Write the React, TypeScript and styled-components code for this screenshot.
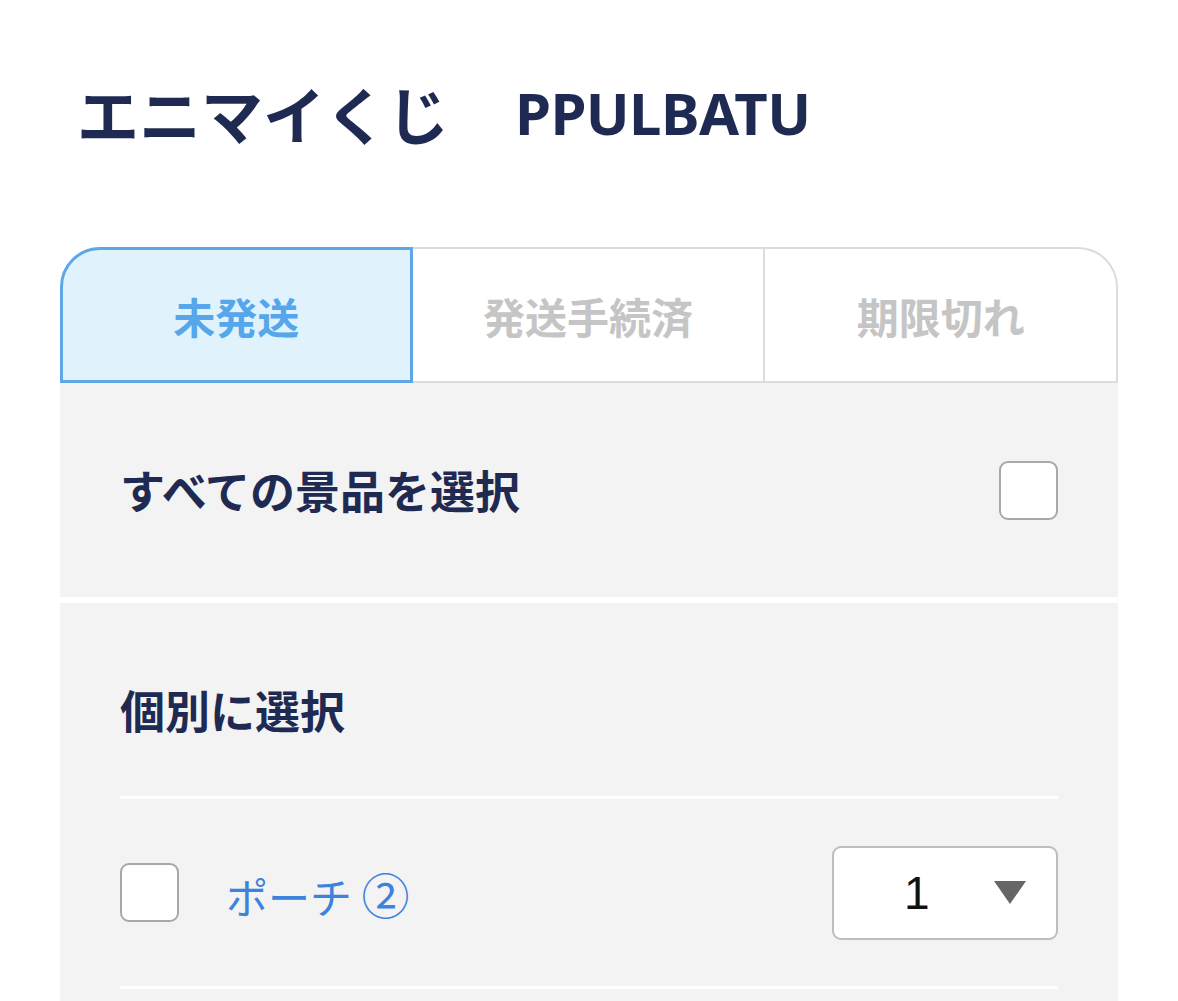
import React from 'react';
import styled, { createGlobalStyle } from 'styled-components';

const GlobalStyle = createGlobalStyle`
  body {
    margin: 0;
    background: #ffffff;
    font-family: 'Noto Sans CJK JP', 'Noto Sans', sans-serif;
  }
`;

const Page = styled.div`
  padding: 0 60px;
`;

const Title = styled.h1`
  margin: 0;
  padding: 68px 0 0 17px;
  height: 247px;
  box-sizing: border-box;
  display: flex;
  align-items: flex-start;
  gap: 66px;
  font-size: 62px;
  line-height: 90px;
  font-weight: 700;
  color: #1f2a52;
`;

const TitleLatin = styled.span`
  font-family: 'Noto Sans', sans-serif;
  font-size: 58px;
  letter-spacing: -0.6px;
`;

const Tabs = styled.div`
  display: grid;
  grid-template-columns: 1fr 1fr 1fr;
  height: 136px;
`;

interface TabProps {
  $active?: boolean;
  $first?: boolean;
  $last?: boolean;
}

const Tab = styled.div<TabProps>`
  display: flex;
  align-items: center;
  justify-content: center;
  box-sizing: border-box;
  font-size: 42px;
  font-weight: 700;
  background: ${(p) => (p.$active ? '#e0f3fd' : '#ffffff')};
  color: ${(p) => (p.$active ? '#56a6ec' : '#c5c5c5')};
  border: ${(p) => (p.$active ? '3px' : '2px')} solid ${(p) => (p.$active ? '#5ea6e6' : '#dcdcdc')};
  border-left: ${(p) => (p.$first ? '' : 'none')};
  border-top-left-radius: ${(p) => (p.$first ? '40px' : '0')};
  border-top-right-radius: ${(p) => (p.$last ? '40px' : '0')};
`;

const Panel = styled.section`
  background: #f3f3f4;
  padding: 0 60px;
`;

const AllRow = styled.div`
  height: 214px;
  display: flex;
  align-items: center;
  justify-content: space-between;
  margin-bottom: 6px;
  background: #f3f3f4;
  padding: 0 60px;
`;

const Label = styled.span`
  display: block;
  font-size: 45px;
  line-height: 54px;
  font-weight: 700;
  color: #1f2a52;
`;

const Heading = styled.div`
  height: 193px;
  box-sizing: border-box;
  padding-top: 80px;
`;

const Divider = styled.div`
  height: 3px;
  background: #ffffff;
`;

const Box = styled.span`
  display: inline-block;
  width: 59px;
  height: 59px;
  box-sizing: border-box;
  background: #ffffff;
  border: 2px solid #a8a8a8;
  border-radius: 9px;
  flex-shrink: 0;
`;

const ItemRow = styled.div`
  height: 187px;
  display: flex;
  align-items: center;
`;

const ItemName = styled.span`
  margin-left: 47px;
  font-size: 42px;
  color: #3d83dc;
  flex: 1;
`;

const Circled = styled.span`
  font-size: 48px;
`;

const Select = styled.div`
  width: 226px;
  height: 94px;
  box-sizing: border-box;
  background: #ffffff;
  border: 2px solid #bdbdbd;
  border-radius: 9px;
  display: flex;
  align-items: center;
  padding: 0 30px 0 70px;
  justify-content: space-between;
`;

const SelectValue = styled.span`
  font-family: 'Liberation Sans', sans-serif;
  font-size: 46px;
  color: #111111;
`;

const Arrow = styled.span`
  width: 0;
  height: 0;
  border-left: 16px solid transparent;
  border-right: 16px solid transparent;
  border-top: 23px solid #666666;
`;

export default function App() {
  return (
    <>
      <GlobalStyle />
      <Page>
        <Title>
          <span>エニマイくじ</span>
          <TitleLatin>PPULBATU</TitleLatin>
        </Title>
        <Tabs>
          <Tab $active $first>未発送</Tab>
          <Tab>発送手続済</Tab>
          <Tab $last>期限切れ</Tab>
        </Tabs>
        <AllRow>
          <Label>すべての景品を選択</Label>
          <Box />
        </AllRow>
        <Panel>
          <Heading>
            <Label>個別に選択</Label>
          </Heading>
          <Divider />
          <ItemRow>
            <Box />
            <ItemName>
              ポーチ <Circled>②</Circled>
            </ItemName>
            <Select>
              <SelectValue>1</SelectValue>
              <Arrow />
            </Select>
          </ItemRow>
          <Divider />
          <ItemRow />
        </Panel>
      </Page>
    </>
  );
}
